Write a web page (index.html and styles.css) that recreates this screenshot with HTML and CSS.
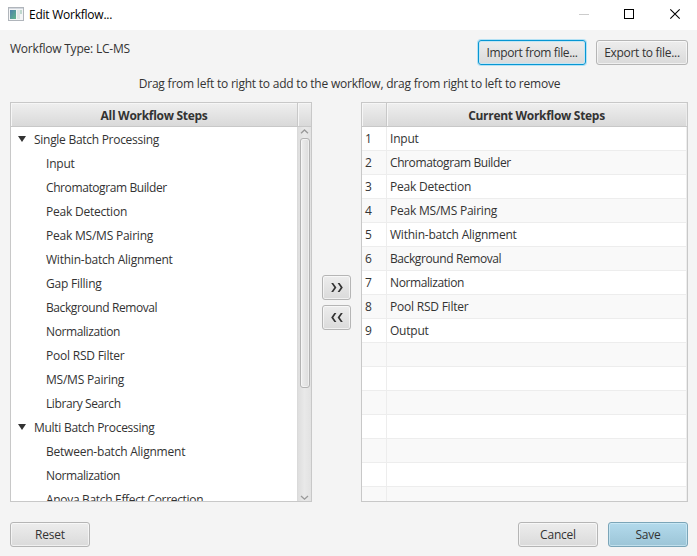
FILE: index.html
```
<!DOCTYPE html>
<html lang="en">
<head>
<meta charset="utf-8">
<title>Edit Workflow...</title>
<link rel="stylesheet" href="styles.css">
</head>
<body>
<div class="window">
  <header class="titlebar">
    <svg class="app-icon" width="16" height="14" viewBox="0 0 16 14">
      <defs><linearGradient id="g" x1="0" y1="0" x2="1" y2="1"><stop offset="0" stop-color="#4f80ab"/><stop offset="1" stop-color="#62b58b"/></linearGradient></defs>
      <rect x=".5" y=".5" width="15" height="13" fill="#f4f5f6" stroke="#b0b5bb"/>
      <rect x="1" y="1" width="14" height="1" fill="#d3d8df"/>
      <rect x="2" y="3" width="6" height="9" fill="url(#g)"/>
      <rect x="9" y="3" width="3" height="9" fill="#e2e6e6"/>
      <rect x="12" y="3" width="2" height="4" fill="#bfd8cd"/>
    </svg>
    <h1 class="title">Edit Workflow...</h1>
    <svg class="controls" width="104" height="12" viewBox="0 0 104 12" fill="none">
      <path d="M0 6.500H10" stroke="#ccc"/>
      <rect x="45.500" y="1.500" width="9" height="9" stroke="#000"/>
      <path d="M91.300 1.300L100.700 10.700M100.700 1.300L91.300 10.700" stroke="#000" stroke-width="1.100"/>
    </svg>
  </header>
  <main class="content">
    <div class="toolbar">
      <span class="type">Workflow Type: LC-MS</span>
      <button class="btn import focused">Import from file...</button>
      <button class="btn export">Export to file...</button>
    </div>
    <p class="hint"><span>Drag from left to right to add to the workflow, drag from right to left to remove</span></p>
    <div class="panels">
      <section class="table tree">
        <div class="head"><div class="th main-th">All Workflow Steps</div><div class="th corner"></div></div>
        <div class="body">
          <ul class="items">
            <li class="group">Single Batch Processing</li>
            <li>Input</li>
            <li class="snug">Chromatogram Builder</li>
            <li>Peak Detection</li>
            <li>Peak MS/MS Pairing</li>
            <li>Within-batch Alignment</li>
            <li>Gap Filling</li>
            <li class="snug">Background Removal</li>
            <li class="snug">Normalization</li>
            <li>Pool RSD Filter</li>
            <li>MS/MS Pairing</li>
            <li class="snug">Library Search</li>
            <li class="group">Multi Batch Processing</li>
            <li>Between-batch Alignment</li>
            <li class="snug">Normalization</li>
            <li class="last">Anova Batch Effect Correction</li>
          </ul>
          <div class="scrollbar">
            <svg width="9" height="11" viewBox="0 0 9 11" fill="none" stroke="#999" stroke-width="1.300"><path d="M1 6.200L4.500 3L8 6.200"/></svg>
            <div class="thumb"></div>
            <svg class="down" width="9" height="9" viewBox="0 0 9 9" fill="none" stroke="#999" stroke-width="1.300"><path d="M1 3L4.500 6.200L8 3"/></svg>
          </div>
        </div>
      </section>
      <div class="movers">
        <button class="btn"><svg width="12" height="9" viewBox="0 0 12 9"><path d="M.2 0H2.200L5.400 4.500L2.200 9H.2L3.300 4.500ZM6.600 0H8.600L11.800 4.500L8.600 9H6.600L9.700 4.500Z"/></svg></button>
        <button class="btn"><svg width="12" height="9" viewBox="0 0 12 9"><path d="M5.400 0H3.400L.2 4.500L3.400 9H5.400L2.300 4.500ZM11.800 0H9.800L6.600 4.500L9.800 9H11.800L8.700 4.500Z"/></svg></button>
      </div>
      <section class="table current">
        <div class="head"><div class="th num-th"></div><div class="th main-th">Current Workflow Steps</div></div>
        <div class="rows">
          <div class="row"><b>1</b><span>Input</span></div>
          <div class="row"><b>2</b><span class="snug">Chromatogram Builder</span></div>
          <div class="row"><b>3</b><span>Peak Detection</span></div>
          <div class="row"><b>4</b><span>Peak MS/MS Pairing</span></div>
          <div class="row"><b>5</b><span>Within-batch Alignment</span></div>
          <div class="row"><b>6</b><span class="snug">Background Removal</span></div>
          <div class="row"><b>7</b><span class="snug">Normalization</span></div>
          <div class="row"><b>8</b><span>Pool RSD Filter</span></div>
          <div class="row"><b>9</b><span>Output</span></div>
          <div class="row"><b></b></div>
          <div class="row"><b></b></div>
          <div class="row"><b></b></div>
          <div class="row"><b></b></div>
          <div class="row"><b></b></div>
          <div class="row"><b></b></div>
          <div class="row"><b></b></div>
        </div>
      </section>
    </div>
    <footer class="actions">
      <button class="btn">Reset</button>
      <button class="btn cancel">Cancel</button>
      <button class="btn primary">Save</button>
    </footer>
  </main>
</div>
</body>
</html>
```
FILE: styles.css
```
* { box-sizing: border-box; }
body { margin: 0; font: 12px/16px "Open Sans", "Noto Sans", sans-serif; letter-spacing: -0.22px; color: #333; }
.window { width: 697px; height: 556px; background: #f4f4f4; overflow: hidden; }
.titlebar { height: 30px; background: #fff; display: flex; align-items: center; padding: 0 14px 0 8px; }
.app-icon { margin-top: -2px; }
.title { margin: 0 auto 0 5px; font-size: 12px; font-weight: 400; color: #000; letter-spacing: -0.24px; }
.controls { margin-top: -2px; }
.content { padding: 10px 9px 0 10px; }
.toolbar { display: flex; height: 25px; gap: 10px; }
.type { margin: 1px auto 0 0; }
.btn {
  width: 80px; height: 25px; padding: 1px 0 0; border: 1px solid #b5b5b5; border-radius: 3px;
  background: linear-gradient(#ededed, #dadada); box-shadow: inset 0 0 0 1px rgba(255, 255, 255, .6);
  font: inherit; letter-spacing: inherit; color: #333; display: flex; align-items: center; justify-content: center;
}
.import { width: 108px; letter-spacing: -0.36px; }
.export { width: 92px; letter-spacing: -0.3px; }
.focused { border-color: #0796d3; box-shadow: 0 0 0 1px #b4e1f4, inset 0 0 0 1px #c3e6f4; }
.hint { margin: 11px 0 10px; height: 16px; padding-left: 1px; text-align: center; }
.panels { display: flex; height: 400px; }
.table { border: 1px solid #c8c8c8; background: #fff; overflow: hidden; }
.tree { width: 302px; }
.current { width: 327px; }
.head { display: flex; height: 24px; border-bottom: 1px solid #c8c8c8; }
.th { background: linear-gradient(#efefef, #d9d9d9); box-shadow: inset 1px 1px 0 #f6f6f6; border-right: 1px solid #c8c8c8; }
.main-th { flex: 1; text-align: center; font-weight: 700; line-height: 26px; letter-spacing: -0.3px; }
.current .main-th { border-right-color: #ececec; }
.corner { width: 13px; border-right: 0; }
.body { display: flex; height: 375px; }
.items { flex: 1; margin: 0; padding: 1px 0 0; list-style: none; overflow: hidden; }
.items li { height: 24px; line-height: 24px; padding-left: 35px; white-space: nowrap; }
.items .group { padding-left: 7px; display: flex; align-items: center; gap: 8px; letter-spacing: -0.28px; }
.items .snug, .row .snug { letter-spacing: -0.4px; }
.items .last { letter-spacing: -0.32px; }
.group::before { content: ""; border: 4px solid transparent; border-top: 6px solid #333; border-bottom: 0; margin-top: -2px; }
.scrollbar { width: 14px; border-left: 1px solid #dadada; background: linear-gradient(90deg, #dedede, #e9e9e9 50%, #e2e2e2); display: flex; flex-direction: column; align-items: center; }
.thumb { width: 10px; height: 250px; border: 1px solid #b2b2b2; border-radius: 3px; background: linear-gradient(90deg, #eee, #dcdcdc); box-shadow: inset 0 0 0 1px rgba(255, 255, 255, .5); }
.down { margin-top: auto; }
.movers { width: 49px; display: flex; flex-direction: column; align-items: center; justify-content: center; gap: 5px; }
.movers .btn { width: 29px; padding: 0; }
.movers svg { fill: #333; }
.num-th { width: 25px; }
.rows { height: 375px; overflow: hidden; }
.row { display: flex; height: 24px; line-height: 24px; border-bottom: 1px solid #ededed; border-right: 1px solid #ededed; }
.row:nth-child(even) { background: #f9f9f9; }
.row b { width: 25px; padding-left: 3px; border-right: 1px solid #ededed; font-weight: 400; letter-spacing: 0; }
.row span { padding-left: 3px; }
.actions { display: flex; gap: 10px; margin-top: 20px; }
.cancel { margin-left: auto; }
.primary { border-color: #7ba5b8; background: linear-gradient(#b3daec, #9cc5d7); box-shadow: inset 0 0 0 1px rgba(215, 240, 250, .6); }
```
